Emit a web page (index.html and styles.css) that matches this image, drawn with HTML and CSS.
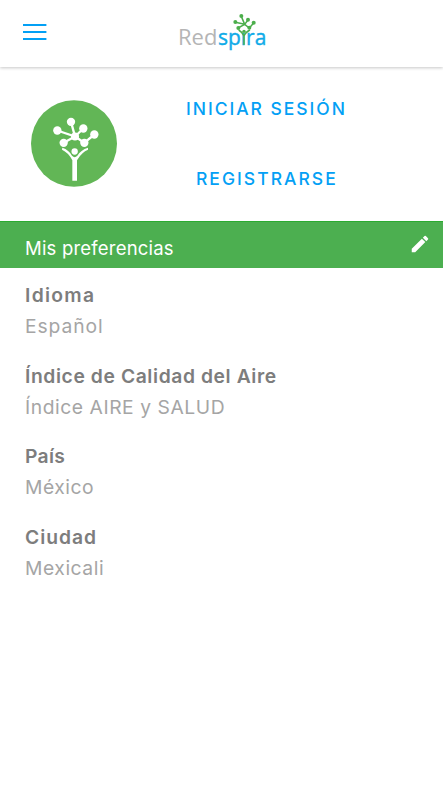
FILE: index.html
```html
<!DOCTYPE html>
<html lang="es">
<head>
<meta charset="utf-8">
<meta name="viewport" content="width=device-width">
<title>Redspira</title>
<link rel="stylesheet" href="styles.css">
</head>
<body>
<header class="topbar">
  <button class="menu" aria-label="Menú"><svg viewBox="0 0 24 18"><path d="M0 2H23.4M0 9H23.4M0 16H23.4"/></svg></button>
  <svg class="logo" viewBox="0 0 330 144" role="img" aria-label="Redspira">
    <text class="logo-red" x="24" y="110" textLength="118" lengthAdjust="spacingAndGlyphs">Red</text>
    <text class="logo-spira" x="144" y="110" textLength="145" lengthAdjust="spacingAndGlyphs">spıra</text>
    <g class="logo-tree">
      <path d="M196 43L224 49L213 23M224 49L234 36M224 49L204 60M224 49L238 60L251 45M206 66Q218 73 222 84Q226 73 240 66M222 82V110"/>
      <circle cx="196" cy="42" r="6"/><circle cx="214" cy="24" r="6"/><circle cx="234" cy="35" r="6"/><circle cx="251" cy="44" r="6"/><circle cx="205" cy="60" r="6"/><circle cx="238" cy="59" r="6"/><circle cx="222" cy="70" r="5"/>
    </g>
  </svg>
</header>
<section class="account">
  <svg class="avatar" viewBox="33 30 258 260" aria-hidden="true">
    <ellipse class="disc" cx="162" cy="160" rx="129" ry="130"/>
    <g class="tree">
      <path d="M112 121L165 139L153 95M165 139L190 115M131 158L165 139L193 158L223 133"/>
      <circle cx="153" cy="95" r="12.5"/><circle cx="112" cy="121" r="12.5"/><circle cx="190" cy="115" r="12.5"/><circle cx="223" cy="133" r="12.5"/><circle cx="131" cy="158" r="12.5"/><circle cx="193" cy="158" r="12.5"/><circle cx="165" cy="139" r="12"/><circle cx="164" cy="184" r="9.5"/>
      <path class="fill" d="M127 173Q147 180 156 197Q164 205 172 197Q182 180 204 173V179Q186 186 171 210V272H157V210Q144 187 126 179Z"/>
    </g>
  </svg>
  <nav class="links">
    <a class="login">INICIAR SESIÓN</a>
    <a class="register">REGISTRARSE</a>
  </nav>
</section>
<section>
  <div class="band">
    <h1>Mis preferencias</h1>
    <svg class="pencil" viewBox="0 0 24 24" aria-hidden="true"><path d="M3 17.25V21h3.75L17.81 9.94l-3.75-3.75L3 17.25zM20.71 7.04a1 1 0 0 0 0-1.41l-2.34-2.34a1 1 0 0 0-1.41 0l-1.83 1.83 3.75 3.75 1.83-1.83z"/></svg>
  </div>
  <dl class="prefs">
    <div><dt class="idioma">Idioma</dt><dd class="espanol">Español</dd></div>
    <div><dt class="indice">Índice de Calidad del Aire</dt><dd class="salud">Índice AIRE y SALUD</dd></div>
    <div><dt class="pais">País</dt><dd class="mexico">México</dd></div>
    <div><dt class="ciudad">Ciudad</dt><dd class="mexicali">Mexicali</dd></div>
  </dl>
</section>
</body>
</html>
```
FILE: styles.css
```css
* { box-sizing: border-box; }
body { margin: 0; background: #fff; font-family: Inter, "Open Sans", sans-serif; }
.topbar { height: 67px; display: flex; align-items: flex-start; padding: 8px 0 0 23px; box-shadow: 0 1px 3px rgba(0,0,0,.22); }
.menu { width: 24px; margin: 15px 123px 0 0; padding: 0; border: 0; background: none; }
.menu svg { display: block; width: 24px; height: 18px; fill: none; stroke: #03a0f5; stroke-width: 2.2; }
.logo { width: 110px; height: 48px; }
.logo text { font-family: "Open Sans", sans-serif; font-size: 64px; }
.logo-red { fill: #b5b5b5; }
.logo-spira { fill: #0fabe8; stroke: #0fabe8; stroke-width: 1.2; }
.logo-tree { fill: #4cae4c; }
.logo-tree path { fill: none; stroke: #4cae4c; stroke-width: 4.5; }
.account { height: 154px; display: flex; padding: 33px 0 0 31px; }
.avatar { width: 86px; height: 87px; }
.disc { fill: #62b656; }
.tree { fill: #fff; }
.tree path { fill: none; stroke: #fff; stroke-width: 7; }
.tree .fill { fill: #fff; stroke: none; }
.links { margin-left: 69px; font-size: 17.5px; font-weight: 500; color: #03a0f5; line-height: 22px; white-space: nowrap; }
.links a { display: block; }
.login { margin-top: -2px; letter-spacing: 1.97px; }
.register { margin: 48px 0 0 10px; letter-spacing: 2.03px; }
.band { height: 47px; background: #4caf50; border-top: 1px solid #2bab31; display: flex; align-items: center; justify-content: space-between; padding: 0 12px 0 25px; color: #fff; }
.band h1 { margin: 6px 0 0; font-size: 18.5px; line-height: 24px; font-weight: 400; letter-spacing: .2px; }
.pencil { width: 22px; height: 22px; margin-bottom: 2px; fill: #fff; }
.prefs { margin: 12px 0 0 25px; font-size: 19.3px; white-space: nowrap; }
.prefs div { height: 80.6px; }
.prefs dt { line-height: 31px; font-weight: 600; color: #7d7d7d; }
.prefs dd { margin: 0; line-height: 30px; font-weight: 400; color: #a5a5a5; }
.idioma { letter-spacing: 1.3px; }
.espanol { letter-spacing: .9px; }
.indice { letter-spacing: .59px; }
.salud { letter-spacing: .55px; }
.pais { letter-spacing: .3px; }
.mexico { letter-spacing: .5px; }
.ciudad { letter-spacing: .95px; }
.mexicali { letter-spacing: .55px; }
```
